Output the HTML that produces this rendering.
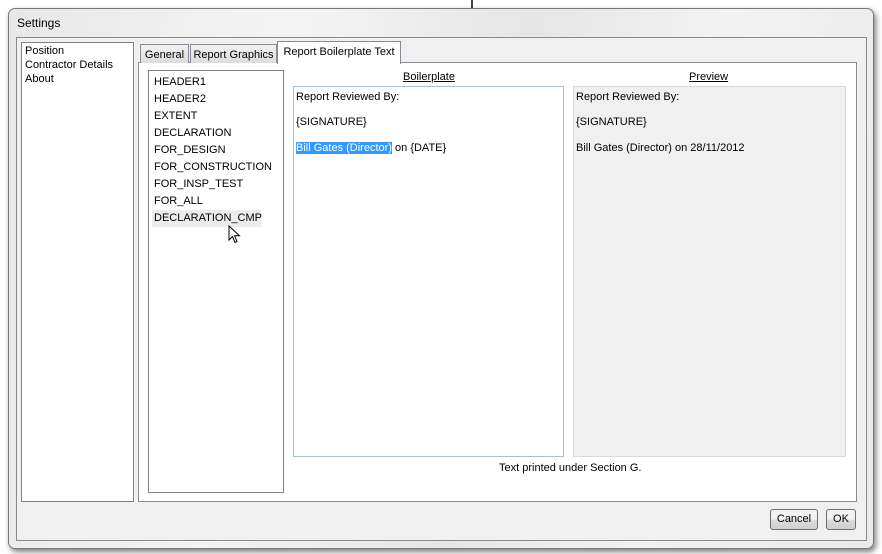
<!DOCTYPE html>
<html><head><style>
*{margin:0;padding:0;box-sizing:border-box}
body{width:882px;height:554px;background:#fff;position:relative;overflow:hidden;font-family:"Liberation Sans",sans-serif;font-size:11px;color:#000}
.a{position:absolute;white-space:nowrap}
.frame{left:8px;top:8px;width:866px;height:541px;background:linear-gradient(100deg,#e8e8e8 0%,#f4f4f4 30%,#e6e6e6 55%,#f2f2f2 75%,#eaeaea 100%);border:1px solid #777;border-radius:7px;box-shadow:2px 3px 6px rgba(0,0,0,.5)}
.client{left:16px;top:37px;width:851px;height:504px;background:#f0f0f0;border:1px solid #8a8a8a}
.box{background:#fff;border:1px solid #828790}
.li{position:absolute;left:5px;line-height:17px;white-space:nowrap}
.tab{position:absolute;border:1px solid #898c95;border-bottom:none;background:linear-gradient(#f2f2f2,#dcdcdc);padding:4px 0 0;text-align:center;height:19px;white-space:nowrap}
.btn{position:absolute;border:1px solid #707070;border-radius:3px;background:linear-gradient(#f2f2f2 50%,#dddddd 50%,#cfcfcf);text-align:center;line-height:19px}
</style></head><body>
<div class="a" style="left:471px;top:0;width:2px;height:9px;background:#444"></div>
<div class="a frame"></div>
<div class="a" style="left:17px;top:16px;font-size:12px">Settings</div>
<div class="a client"></div>
<div class="a box" style="left:21px;top:42px;width:113px;height:460px;border-color:#828282">
 <div class="a" style="left:3px;top:1px;line-height:14px">Position<br>Contractor Details<br>About</div>
</div>
<div class="a" style="left:138px;top:62px;width:719px;height:440px;background:#fff;border:1px solid #898c95"></div>
<div class="tab" style="left:140px;top:44px;width:49px">General</div>
<div class="tab" style="left:190px;top:44px;width:87px">Report Graphics</div>
<div class="tab" style="left:277px;top:41px;width:124px;height:23px;background:#fff;padding-top:4px">Report Boilerplate Text</div>
<div class="a box" style="left:148px;top:70px;width:136px;height:423px;border-color:#828282">
 <div class="li" style="top:3px">HEADER1</div>
 <div class="li" style="top:20px">HEADER2</div>
 <div class="li" style="top:37px">EXTENT</div>
 <div class="li" style="top:54px">DECLARATION</div>
 <div class="li" style="top:71px">FOR_DESIGN</div>
 <div class="li" style="top:88px">FOR_CONSTRUCTION</div>
 <div class="li" style="top:105px">FOR_INSP_TEST</div>
 <div class="li" style="top:122px">FOR_ALL</div>
 <div class="li" style="top:139px;left:3px;padding:0 2px;background:#ececec;width:109px">DECLARATION_CMP</div>
 <svg class="a" style="left:79px;top:154px" width="14" height="20" viewBox="0 0 14 20"><path d="M1 1 L1 15 L4.5 11.5 L7 17.5 L9 16.6 L6.6 10.8 L11.5 10.8 Z" fill="#fff" stroke="#000" stroke-width="1"/></svg>
</div>
<div class="a" style="left:403px;top:71px;text-decoration:underline">Boilerplate</div>
<div class="a" style="left:689px;top:71px;text-decoration:underline">Preview</div>
<div class="a" style="left:293px;top:86px;width:271px;height:371px;background:#fff;border:1px solid #a9bfd6">
 <div class="a" style="left:2px;top:4px">Report Reviewed By:</div>
 <div class="a" style="left:2px;top:29px">{SIGNATURE}</div>
 <div class="a" style="left:2px;top:55px"><span style="background:#3399ff;color:#fff">Bill Gates (Director)</span> on {DATE}</div>
</div>
<div class="a" style="left:573px;top:86px;width:273px;height:371px;background:#f0f0f0;border:1px solid #dadada">
 <div class="a" style="left:2px;top:4px">Report Reviewed By:</div>
 <div class="a" style="left:2px;top:29px">{SIGNATURE}</div>
 <div class="a" style="left:2px;top:55px">Bill Gates (Director) on 28/11/2012</div>
</div>
<div class="a" style="left:499px;top:462px">Text printed under Section G.</div>
<div class="btn" style="left:770px;top:509px;width:48px;height:21px">Cancel</div>
<div class="btn" style="left:826px;top:509px;width:30px;height:21px">OK</div>
</body></html>
